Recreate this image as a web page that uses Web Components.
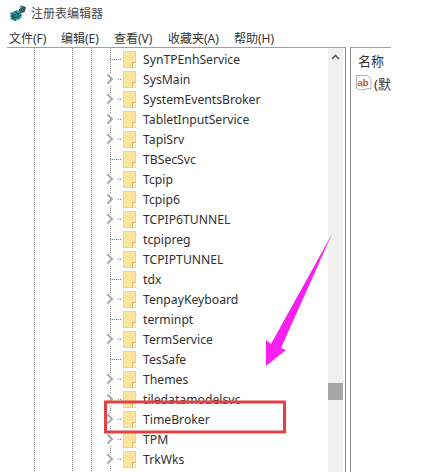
<!DOCTYPE html>
<html lang="zh">
<head>
<meta charset="utf-8">
<title>注册表编辑器</title>
<style>
  html, body { margin: 0; height: 472px; overflow: hidden; background: #fff; }
  body { font-family: "Noto Sans", "Noto Sans CJK SC", sans-serif; position: relative; }
</style>
</head>
<body>
<reg-window>
  <reg-menu slot="menu">
    <reg-menu-item style="width:52px">文件(F)</reg-menu-item>
    <reg-menu-item style="width:53px">编辑(E)</reg-menu-item>
    <reg-menu-item style="width:54px">查看(V)</reg-menu-item>
    <reg-menu-item style="width:66px">收藏夹(A)</reg-menu-item>
    <reg-menu-item>帮助(H)</reg-menu-item>
  </reg-menu>
  <reg-tree slot="tree">
    <reg-key>SynTPEnhService</reg-key>
    <reg-key expand>SysMain</reg-key>
    <reg-key expand>SystemEventsBroker</reg-key>
    <reg-key expand>TabletInputService</reg-key>
    <reg-key expand>TapiSrv</reg-key>
    <reg-key>TBSecSvc</reg-key>
    <reg-key expand>Tcpip</reg-key>
    <reg-key expand>Tcpip6</reg-key>
    <reg-key expand>TCPIP6TUNNEL</reg-key>
    <reg-key>tcpipreg</reg-key>
    <reg-key expand>TCPIPTUNNEL</reg-key>
    <reg-key>tdx</reg-key>
    <reg-key expand>TenpayKeyboard</reg-key>
    <reg-key>terminpt</reg-key>
    <reg-key expand>TermService</reg-key>
    <reg-key>TesSafe</reg-key>
    <reg-key expand>Themes</reg-key>
    <reg-key expand>tiledatamodelsvc</reg-key>
    <reg-key expand>TimeBroker</reg-key>
    <reg-key expand>TPM</reg-key>
    <reg-key expand>TrkWks</reg-key>
  </reg-tree>
  <reg-values slot="values"></reg-values>
</reg-window>
<reg-markup></reg-markup>

<script>
class RegWindow extends HTMLElement {
    constructor() {
        super();
        this.attachShadow({ mode: 'open' });
        this.shadowRoot.innerHTML = `
            <style>
                :host { display: flex; flex-direction: column; width: 391px; height: 472px; color: #333; }
                .title { display: flex; align-items: center; height: 27px; padding: 0 0 2px 10px; box-sizing: border-box; gap: 5px; font-size: 12px; color: #4a4a4a; }
                .title svg { width: 16px; height: 16px; }
                .body { display: flex; flex: 1; min-height: 0; }
                .left { display: flex; width: 338px; margin-left: 7px; border-top: 1px solid #a0a0a4; border-right: 1px solid #8c8c90; }
                .right { flex: 1; margin-left: 4px; border-top: 1px solid #a0a0a4; border-left: 1px solid #8c8c90; min-width: 0; }
                .bar { width: 15px; margin-left: auto; margin-right: 2px; background: #f0f0f0; display: flex; flex-direction: column; }
                .up { height: 17px; display: flex; justify-content: center; padding-top: 6px; box-sizing: border-box; }
                .up svg { width: 9px; height: 6px; }
                .gap { height: 318px; flex: none; }
                .thumb { height: 17px; background: #a6a6a6; }
            </style>
            <div class="title">
                <svg viewBox="0 0 16 16">
                    <path d="M0.5 8 L7 5 L11.5 7 L11.5 13 L5 16 L0.5 14 Z" fill="#2aa5a8"/>
                    <path d="M0.5 8 L5 10 L5 16 M5 10 L11.5 7 M2.7 9 L2.7 15 M8.2 8.5 L8.2 14.5 M0.5 11 L5 13 L11.5 10 M4 6.5 L8 8.5" stroke="#123a3e" stroke-width="0.8" fill="none"/>
                    <path d="M9 5 L12.5 1.5 L15.5 2.5 L14 7 L11.5 7 Z" fill="#246a70" stroke="#10262a" stroke-width="0.8"/>
                    <path d="M10 1.5 L12 0.5 L12.5 2.5 L10.5 3.8 Z" fill="#4cc0c2" stroke="#123a3e" stroke-width="0.4"/>
                </svg>
                <span>注册表编辑器</span>
            </div>
            <slot name="menu"></slot>
            <div class="body">
                <div class="left">
                    <slot name="tree"></slot>
                    <div class="bar">
                        <div class="up"><svg viewBox="0 0 9 6"><path d="M1 5 L4.5 1.5 L8 5" fill="none" stroke="#606060" stroke-width="1.7"/></svg></div>
                        <div class="gap"></div>
                        <div class="thumb"></div>
                    </div>
                </div>
                <div class="right"><slot name="values"></slot></div>
            </div>
        `;
    }
}

class RegMenu extends HTMLElement {
    constructor() {
        super();
        this.attachShadow({ mode: 'open' });
        this.shadowRoot.innerHTML = `
            <style>
                :host { display: flex; align-items: center; height: 20px; box-sizing: border-box; padding: 2px 0 0 9px; font-size: 12px; color: #333; }
            </style>
            <slot></slot>
        `;
    }
}

class RegMenuItem extends HTMLElement {
    constructor() {
        super();
        this.attachShadow({ mode: 'open' });
        this.shadowRoot.innerHTML = `
            <style>:host { display: block; white-space: nowrap; flex: none; }</style>
            <slot></slot>
        `;
    }
}

class RegTree extends HTMLElement {
    constructor() {
        super();
        this.attachShadow({ mode: 'open' });
        // the dotted guide lines of the parent levels run the full height
        const guide = 'repeating-linear-gradient(#85858a 0 1px, transparent 1px 2px)';
        this.shadowRoot.innerHTML = `
            <style>
                :host {
                    display: block; width: 321px; flex: none; padding-top: 1px; box-sizing: border-box; overflow: hidden;
                    background-image: ${guide}, ${guide}, ${guide}, ${guide};
                    background-size: 1px 100%;
                    background-repeat: no-repeat;
                    background-position: 27px 0, 65px 0, 84px 0, 103px 0;
                }
            </style>
            <slot></slot>
        `;
    }
}

class RegKey extends HTMLElement {
    constructor() {
        super();
        this.attachShadow({ mode: 'open' });
    }

    connectedCallback() {
        const chevron = this.hasAttribute('expand')
            ? '<svg class="chev" viewBox="0 0 8 12"><path d="M1.5 1.5 L6 6 L1.5 10.5" fill="none" stroke="#a8a8a8" stroke-width="2"/></svg>'
            : '';
        this.shadowRoot.innerHTML = `
            <style>
                :host { display: flex; align-items: center; height: 20px; padding-left: 96px; font-size: 12.2px; color: #303030; white-space: nowrap; }
                .twist { display: flex; align-items: center; width: 18px; height: 20px; flex: none; padding-left: 7px; box-sizing: border-box; }
                :host([expand]) .twist { padding-left: 3px; }
                .chev { width: 8px; height: 12px; flex: none; margin-right: 4px; background: #fff; }
                .dots { flex: 1; height: 0; border-top: 1px dotted #77777c; margin-top: 1px; }
                .folder { width: 13px; height: 17px; flex: none; margin: 0 7px 0 2px; }
            </style>
            <div class="twist">${chevron}<span class="dots"></span></div>
            <svg class="folder" viewBox="0 0 13 17">
                <rect x="0.5" y="0.5" width="12" height="16" fill="#fce49c" stroke="#eed48e"/>
                <path d="M9.5 16.5 V11.5 H12.5" fill="none" stroke="#dcb860"/>
                <rect x="10" y="12" width="2.5" height="4.5" fill="#fff3cc"/>
            </svg>
            <slot></slot>
        `;
    }
}

class RegValues extends HTMLElement {
    constructor() {
        super();
        this.attachShadow({ mode: 'open' });
        this.shadowRoot.innerHTML = `
            <style>
                :host { display: block; overflow: hidden; padding: 3px 0 0 7px; font-size: 13px; color: #333; white-space: nowrap; }
                .head { height: 20px; line-height: 20px; }
                .row { display: flex; align-items: center; height: 20px; margin-top: 2px; gap: 2px; margin-left: -2px; }
                svg { width: 16px; height: 16px; flex: none; }
                text { font: bold 9.5px "Liberation Sans", sans-serif; fill: #c4542c; }
            </style>
            <div class="head">名称</div>
            <div class="row">
                <svg viewBox="0 0 16 16">
                    <path d="M0.5 0.5 H11 L15 3.5 V14 Q12 12.5 9 14.5 Q5 16 0.5 13.5 Z" fill="#fff" stroke="#b0b0b4"/>
                    <text x="1.5" y="10.5">ab</text>
                </svg>
                <span>(默</span>
            </div>
        `;
    }
}

class RegMarkup extends HTMLElement {
    constructor() {
        super();
        this.attachShadow({ mode: 'open' });
        this.shadowRoot.innerHTML = `
            <style>
                :host { position: absolute; left: 0; top: 0; width: 428px; height: 472px; pointer-events: none; }
                svg { display: block; width: 428px; height: 472px; }
            </style>
            <svg viewBox="0 0 428 472">
                <polygon points="332,234 281,348 286,350 266,366 266,340 271,344" fill="#f81ff0"/>
                <rect x="105.5" y="402" width="179" height="30" fill="none" stroke="#e24242" stroke-width="3"/>
            </svg>
        `;
    }
}

customElements.define('reg-window', RegWindow);
customElements.define('reg-menu', RegMenu);
customElements.define('reg-menu-item', RegMenuItem);
customElements.define('reg-tree', RegTree);
customElements.define('reg-key', RegKey);
customElements.define('reg-values', RegValues);
customElements.define('reg-markup', RegMarkup);
</script>
</body>
</html>
